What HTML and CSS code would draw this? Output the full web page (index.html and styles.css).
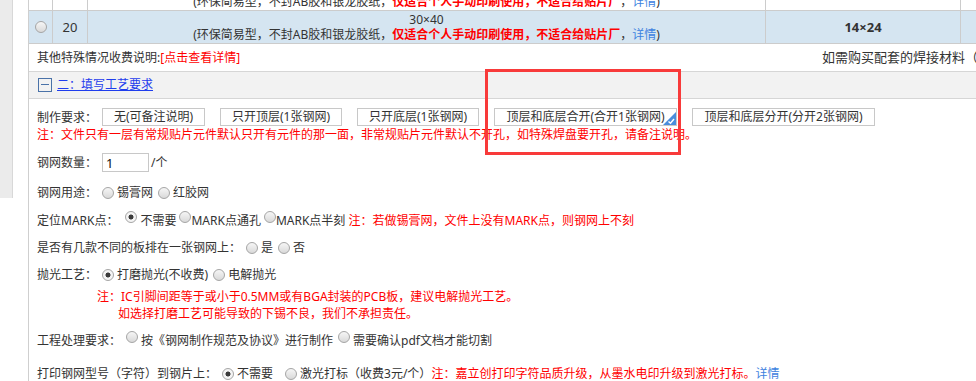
FILE: index.html
```html
<!DOCTYPE html>
<html lang="zh-CN">
<head>
  <meta charset="UTF-8">
  <title>钢网订单 - 填写工艺要求</title>
  <link rel="stylesheet" href="styles.css">
</head>
<body>

<div class="page">
  <div class="side"><div class="side-panel"></div></div>

  <div class="main">
    <!-- 钢网尺寸 -->
    <div class="size-table">
      <div class="tr">
        <div class="td c1"><input type="radio" class="rd" name="size"></div>
        <div class="td c2">19</div>
        <div class="td c3">
          <div>28×38</div>
          <div>(环保简易型，不封AB胶和银龙胶纸，<b class="warn">仅适合个人手动印刷使用，不适合给贴片厂</b>，<a class="lnk">详情</a>)</div>
        </div>
        <div class="td c4"><b>14×24</b></div>
        <div class="td c5"></div>
      </div>
      <div class="tr sel">
        <div class="td c1"><input type="radio" class="rd" name="size"></div>
        <div class="td c2">20</div>
        <div class="td c3">
          <div>30×40</div>
          <div>(环保简易型，不封AB胶和银龙胶纸，<b class="warn">仅适合个人手动印刷使用，不适合给贴片厂</b>，<a class="lnk">详情</a>)</div>
        </div>
        <div class="td c4"><b>14×24</b></div>
        <div class="td c5"></div>
      </div>
    </div>

    <div class="other-row">
      <div>其他特殊情况收费说明:<a class="red">[点击查看详情]</a></div>
      <div class="buy">如需购买配套的焊接材料（如锡膏、助焊剂等），请联系客服</div>
    </div>

    <div class="sec-head">
      <span class="fold"></span>
      <a class="sec-title">二：填写工艺要求</a>
    </div>

    <div class="form">
      <div class="row-btns">
        <span>制作要求：</span>
        <button class="opt w1">无(可备注说明)</button>
        <button class="opt w2">只开顶层(1张钢网)</button>
        <button class="opt w2">只开底层(1张钢网)</button>
        <button class="opt w3 on">顶层和底层合开(合开1张钢网)
          <svg class="tick" width="13" height="13" viewBox="0 0 13 13"><polygon points="13,0 13,13 0,13" fill="#4a8ddc"/><path d="M5.5 9.5 L7.5 11.3 L11 7" stroke="#fff" stroke-width="1.4" fill="none"/></svg>
        </button>
        <button class="opt w3">顶层和底层分开(分开2张钢网)</button>
      </div>
      <div class="note red">注：文件只有一层有常规贴片元件默认只开有元件的那一面，非常规贴片元件默认不开孔，如特殊焊盘要开孔，请备注说明。</div>

      <div class="row row-qty">钢网数量：<input type="text" class="qty" value="1">/个</div>

      <div class="row m11">钢网用途：<input type="radio" class="rd" name="use">锡膏网<input type="radio" class="rd" name="use">红胶网</div>

      <div class="row m8">定位MARK点：<input type="radio" class="rd up sp" name="mark" checked>不需要<input type="radio" class="rd up tight" name="mark">MARK点通孔<input type="radio" class="rd up tight" name="mark">MARK点半刻 <span class="red">注：若做锡膏网，文件上没有MARK点，则钢网上不刻</span></div>

      <div class="row m7">是否有几款不同的板排在一张钢网上：<input type="radio" class="rd" name="multi">是<input type="radio" class="rd" name="multi">否</div>

      <div class="row m7">抛光工艺：<input type="radio" class="rd" name="polish" checked>打磨抛光(不收费)<input type="radio" class="rd" name="polish">电解抛光</div>
      <div class="polish-note red">
        <div>注：IC引脚间距等于或小于0.5MM或有BGA封装的PCB板，建议电解抛光工艺。</div>
        <div class="indent">如选择打磨工艺可能导致的下锡不良，我们不承担责任。</div>
      </div>

      <div class="row m9">工程处理要求：<input type="radio" class="rd up" name="eng">按《钢网制作规范及协议》进行制作<input type="radio" class="rd up" name="eng">需要确认pdf文档才能切割</div>

      <div class="row m13">打印钢网型号（字符）到钢片上：<input type="radio" class="rd" name="print" checked>不需要<input type="radio" class="rd wide" name="print">激光打标（收费3元/个）<span class="red">注：嘉立创打印字符品质升级，从墨水电印升级到激光打标。</span><a class="lnk">详情</a></div>
    </div>
  </div>
</div>

<div class="mark-box"></div>

</body>
</html>
```

FILE: styles.css
```css
body {
  margin: 0;
  background-color: #fff;
  font-family: "Noto Sans", "Noto Sans CJK SC", sans-serif;
  font-size: 12px;
  color: #333;
  overflow: hidden;
}
a {
  cursor: pointer;
}
.red {
  color: #f00;
}
.lnk {
  color: #3d82e0;
}

.page {
  display: flex;
  margin-top: -22px;
}
.side {
  width: 13px;
  flex-shrink: 0;
}
.side-panel {
  height: 220px;
  background-color: #ebebeb;
  border-right: 1px solid #d8d8d8;
  box-sizing: border-box;
}
.main {
  margin-left: 15px;
  width: 1100px;
  flex-shrink: 0;
  border-left: 1px solid #cfcfcf;
}

/* size table */
.tr {
  display: grid;
  grid-template-columns: 24px 35px 678px 195px 168px;
  background-color: #fff;
}
.tr.sel {
  background-color: #d5e5f1;
}
.td {
  height: 33px;
  box-sizing: border-box;
  border-right: 1px solid #ccc;
  border-bottom: 1px solid #ccc;
  display: flex;
  flex-direction: column;
  align-items: center;
  justify-content: center;
  text-align: center;
  line-height: 15px;
}
.c2 {
  font-size: 13px;
}
.c4 b {
  font-size: 13px;
}
.warn {
  color: #f00;
}

.other-row {
  display: grid;
  grid-template-columns: 785px auto;
  height: 28px;
  line-height: 27px;
  padding-left: 8px;
  box-sizing: border-box;
  border-bottom: 1px solid #d6d6d6;
  white-space: nowrap;
}
.buy {
  font-size: 13px;
}

.sec-head {
  height: 27px;
  box-sizing: border-box;
  background-color: #f2f2f2;
  border-bottom: 1px solid #d6d6d6;
  display: flex;
  align-items: center;
  padding-left: 9px;
}
.fold {
  width: 14px;
  height: 14px;
  box-sizing: border-box;
  border: 1px solid #4a72a8;
  position: relative;
}
.fold::after {
  content: "";
  position: absolute;
  left: 2px;
  right: 2px;
  top: 5px;
  height: 1px;
  background-color: #4a72a8;
}
.sec-title {
  margin-left: 5px;
  color: #1f3ded;
  text-decoration: underline;
  line-height: 16px;
}

/* form */
.form {
  padding: 9px 0 0 8px;
}
.row-btns {
  display: flex;
  align-items: center;
  height: 18px;
  white-space: nowrap;
}
.opt {
  height: 18px;
  padding: 0;
  margin-left: 15px;
  border: 1px solid #c8c8c8;
  background-color: #fff;
  font-family: inherit;
  font-size: 12px;
  line-height: 16px;
  color: #333;
  position: relative;
}
.opt.w1 {
  width: 103px;
  margin-left: 5px;
}
.opt.w2 {
  width: 122px;
}
.opt.w3 {
  width: 183px;
}
.tick {
  position: absolute;
  right: 0;
  bottom: 0;
}
.note {
  margin-top: 1px;
  line-height: 16px;
  white-space: nowrap;
}

.row {
  line-height: 20px;
  white-space: nowrap;
}
.row-qty {
  margin-top: 10px;
  line-height: 19px;
  height: 19px;
  display: flex;
  align-items: center;
}
.qty {
  width: 47px;
  height: 19px;
  box-sizing: border-box;
  margin: 0 2px 0 5px;
  padding: 0 3px;
  border: 1px solid #c8c8c8;
  font-family: inherit;
  font-size: 13px;
  color: #111;
}
.m7 { margin-top: 7px; }
.m8 { margin-top: 8px; }
.m9 { margin-top: 9px; }
.m11 { margin-top: 11px; }
.m13 { margin-top: 13px; }

.rd {
  -webkit-appearance: none;
  appearance: none;
  width: 12px;
  height: 12px;
  margin: 0 3px 0 5px;
  border: 1px solid #a5a5a5;
  border-radius: 50%;
  background: linear-gradient(#f6f6f6, #d9d9d9);
  vertical-align: -2px;
}
.rd:checked {
  background: radial-gradient(circle, #3a3a3a 0 2.2px, #f4f4f4 2.8px);
}
.rd.up {
  vertical-align: 2px;
}
.rd.sp {
  margin-left: 7px;
}
.rd.tight {
  margin: 0 0 0 3px;
}
.rd.wide {
  margin-left: 12px;
}
.td .rd {
  margin: 0;
  vertical-align: middle;
}

.polish-note {
  margin-top: 3px;
  padding-left: 60px;
  line-height: 17px;
}
.polish-note .indent {
  padding-left: 21px;
}

/* annotation */
.mark-box {
  position: absolute;
  left: 485px;
  top: 69px;
  width: 196px;
  height: 86px;
  box-sizing: border-box;
  border: 3px solid #f83a3a;
}
```
